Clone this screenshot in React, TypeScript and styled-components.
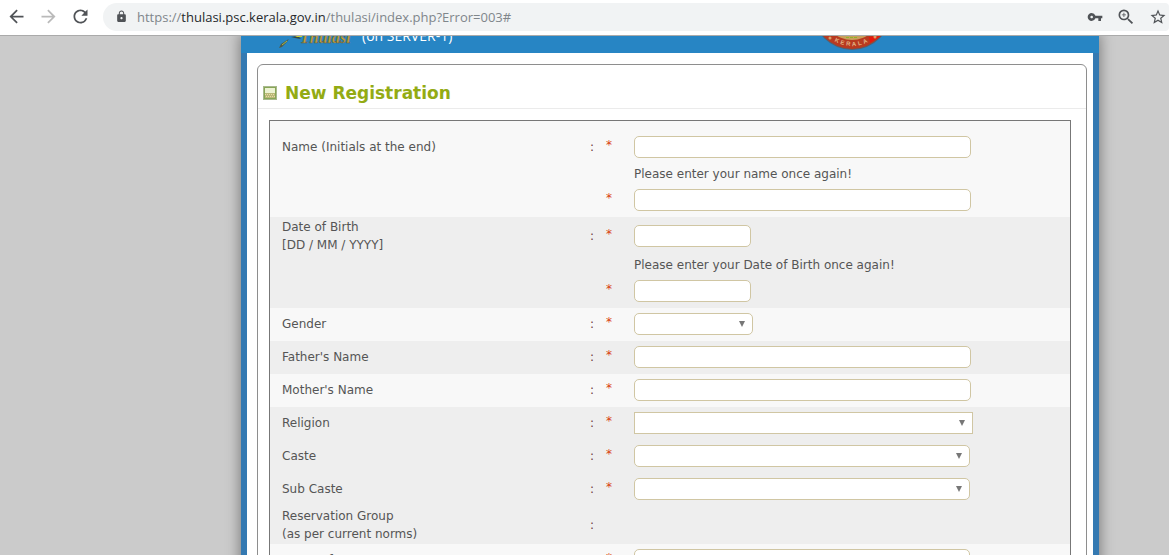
import React from "react";
import styled, { createGlobalStyle } from "styled-components";
import {
  MdArrowBack,
  MdArrowForward,
  MdRefresh,
  MdLock,
  MdVpnKey,
  MdZoomIn,
  MdStarBorder,
} from "react-icons/md";

const GlobalStyle = createGlobalStyle`
  * { box-sizing: border-box; }
  body { margin: 0; background: #cbcbcb; }
`;

const Browser = styled.div`
  display: flex;
  flex-direction: column;
  height: 100vh;
  overflow: hidden;
`;

const Toolbar = styled.header`
  flex: none;
  display: flex;
  align-items: center;
  height: 36px;
  padding: 0 0 2px;
  background: #fff;
  border-bottom: 1px solid #aaa;
`;

const NavButton = styled.button`
  display: flex;
  align-items: center;
  justify-content: center;
  width: 32px;
  height: 32px;
  padding: 0;
  border: 0;
  background: none;
  color: ${(p) => (p.disabled ? "#bababa" : "#505357")};
`;

const AddressBar = styled.div`
  flex: 1;
  display: flex;
  align-items: center;
  height: 28px;
  margin-left: 7px;
  padding: 0 2px 0 12px;
  border-radius: 14px 4px 4px 14px;
  background: #f1f3f4;
  color: #505357;
`;

const Url = styled.div`
  flex: 1;
  margin-left: 9px;
  font: 13px/20px "Open Sans", sans-serif;
  color: #80868b;
  white-space: nowrap;
`;

const Host = styled.span`
  color: #26292c;
`;

const BarActions = styled.div`
  display: flex;
  align-items: center;
  gap: 13px;
`;

const BarButton = styled.button`
  display: flex;
  padding: 0;
  border: 0;
  background: none;
  color: #505357;
`;

const Viewport = styled.main`
  flex: 1;
  min-height: 0;
  overflow: hidden;
  padding: 0 70px 0 241px;
  background: #cbcbcb;
`;

const Site = styled.div`
  background: #fff;
  box-shadow: 0 0 12px 2px rgba(0, 0, 0, 0.35);
`;

const Banner = styled.div`
  display: flex;
  align-items: flex-end;
  height: 17px;
  padding: 0 207px 0 37px;
  overflow: hidden;
  background: #2785c4;
`;

const Logo = styled.div`
  display: flex;
  align-items: flex-end;
  width: 84px;
  height: 17px;
`;

const ServerName = styled.div`
  flex: 1;
  font: 14px/34px "Open Sans", sans-serif;
  color: #fff;
`;

const Body = styled.div`
  padding: 11px 6px 0 10px;
  border: solid #357ab2;
  border-width: 0 6px;
`;

const Panel = styled.section`
  border: 1px solid #8e8e8e;
  border-radius: 6px 6px 0 0;
`;

const PanelHead = styled.div`
  display: flex;
  align-items: center;
  gap: 8px;
  height: 44px;
  padding: 12px 5px 0;
  border-bottom: 1px solid #ebebeb;
`;

const Title = styled.h1`
  margin: 0;
  font: bold 17px/20px "DejaVu Sans", sans-serif;
  color: #93ab14;
`;

const Form = styled.form`
  margin: 11px 15px 0 11px;
  border: 1px solid #777;
  font: 12px/18px "DejaVu Sans", sans-serif;
  color: #555;
`;

const Group = styled.div<{ $shade?: boolean; $first?: boolean }>`
  padding-top: ${(p) => (p.$first ? 10 : 0)}px;
  background: ${(p) => (p.$shade ? "#eee" : "#f8f8f8")};
`;

const Line = styled.div<{ $tall?: boolean }>`
  display: grid;
  grid-template-columns: 308px 16px 28px 1fr;
  align-items: center;
  min-height: 33px;
  padding: 1px 0 ${(p) => (p.$tall ? 1 : 2)}px 12px;
`;

const Hint = styled.p`
  margin: 0 0 0 364px;
  line-height: 20px;
`;

const Label = styled.label`
  white-space: pre-line;
`;

const Colon = styled.span`
  color: #703c3c;
`;

const Star = styled.span`
  padding-bottom: 4px;
  color: #d8400c;
`;

const TextBox = styled.input<{ $width: number }>`
  display: block;
  width: ${(p) => p.$width}px;
  height: 22px;
  padding: 0 5px;
  border: 1px solid #d0c6a3;
  border-radius: 5px;
  background: #fff;
  font: inherit;
  color: inherit;
`;

const SelectWrap = styled.div<{ $width: number }>`
  position: relative;
  width: ${(p) => p.$width}px;

  &::after {
    content: "";
    position: absolute;
    top: 8px;
    right: 8px;
    border: solid transparent;
    border-width: 6px 3px 0;
    border-top-color: #777;
    pointer-events: none;
  }
`;

const SelectBox = styled.select<{ $square?: boolean }>`
  display: block;
  appearance: none;
  width: 100%;
  height: 22px;
  padding: 0 20px 0 5px;
  border: 1px solid #d0c6a3;
  border-radius: ${(p) => (p.$square ? 0 : 5)}px;
  background: #fff;
  font: inherit;
  color: inherit;
`;

type RowProps = {
  id: string;
  label?: string;
  required?: boolean;
  children?: React.ReactNode;
};

const Row = ({ id, label, required = true, children }: RowProps) => (
  <Line $tall={label?.includes("\n")}>
    {label ? <Label htmlFor={id}>{label}</Label> : <span />}
    <Colon>{label ? ":" : ""}</Colon>
    <Star>{required ? "*" : ""}</Star>
    {children}
  </Line>
);

const Select = ({ id, width, square }: { id: string; width: number; square?: boolean }) => (
  <SelectWrap $width={width}>
    <SelectBox id={id} $square={square}>
      <option value="" aria-label="None" />
    </SelectBox>
  </SelectWrap>
);

const LogoMark = () => (
  <svg width="76" height="17" viewBox="0 0 76 17" aria-hidden="true">
    <path d="M1 12 3 8 9 4 11 3 8 7 4 11Z" fill="#4d5a48" />
    <path d="M4 9 9 5" stroke="#a9b94a" strokeWidth="1" />
    <path d="M13 1 20 0 23 3 17 2Z" fill="#38463c" />
    <path d="M17 0h7v1h-5Z" fill="#c9cf35" />
    <path d="M24 6 72 6" stroke="#526d7b" strokeWidth="1" opacity=".5" />
    <text x="22" y="7" fontFamily="Liberation Serif, serif" fontSize="16" fontStyle="italic" fontWeight="bold" fill="#c4a53e" stroke="#5c5a44" strokeWidth=".5">
      Thulasi
    </text>
  </svg>
);

const Emblem = () => (
  <svg width="80" height="17" viewBox="0 64 80 17" role="img" aria-label="Kerala emblem">
    <circle cx="40" cy="39" r="39" fill="#56606e" />
    <circle cx="40" cy="39" r="38" fill="#b83a20" />
    <path d="M57 65 69 64 58 71Z" fill="#e5180c" />
    <circle cx="40" cy="39" r="29" fill="#c9a05c" />
    <path d="M34 65.500h12" stroke="#8fb52b" strokeWidth="1" strokeDasharray="3 1" />
    <circle cx="18" cy="66" r="1.5" fill="#d9a066" />
    <circle cx="63" cy="65" r="1.5" fill="#d9a066" />
    <path id="ring" d="M5 39a35 35 0 0 0 70 0" fill="none" />
    <text fontFamily="Liberation Sans, sans-serif" fontSize="6" fontWeight="bold" letterSpacing="2" fill="#e0b184">
      <textPath href="#ring" startOffset="50%" textAnchor="middle">
        KERALA
      </textPath>
    </text>
  </svg>
);

const PictureIcon = () => (
  <svg width="14" height="14" viewBox="0 0 14 14" aria-hidden="true">
    <rect x=".5" y=".5" width="13" height="13" fill="#87a657" stroke="#a9b98e" />
    <rect x="2" y="2" width="10" height="5" fill="#edf3d3" />
    <rect x="2" y="7" width="10" height="5" fill="#b9b978" />
    <path d="M2 8.500h10M3 10.500h9" stroke="#ecd9a6" strokeDasharray="1 1" />
  </svg>
);

export default function App() {
  return (
    <Browser>
      <GlobalStyle />
      <Toolbar>
        <NavButton aria-label="Back"><MdArrowBack size={21} /></NavButton>
        <NavButton aria-label="Forward" disabled><MdArrowForward size={21} /></NavButton>
        <NavButton aria-label="Reload"><MdRefresh size={21} /></NavButton>
        <AddressBar>
          <MdLock size={13} />
          <Url>
            https://<Host>thulasi.psc.kerala.gov.in</Host>/thulasi/index.php?Error=003#
          </Url>
          <BarActions>
            <BarButton aria-label="Passwords"><MdVpnKey size={16} /></BarButton>
            <BarButton aria-label="Zoom"><MdZoomIn size={20} /></BarButton>
            <BarButton aria-label="Bookmark"><MdStarBorder size={18} /></BarButton>
          </BarActions>
        </AddressBar>
      </Toolbar>
      <Viewport>
        <Site>
          <Banner>
            <Logo><LogoMark /></Logo>
            <ServerName>(on SERVER-1)</ServerName>
            <Emblem />
          </Banner>
          <Body>
            <Panel>
              <PanelHead>
                <PictureIcon />
                <Title>New Registration</Title>
              </PanelHead>
              <Form>
                <Group $first>
                  <Row id="name" label="Name (Initials at the end)">
                    <TextBox id="name" $width={337} />
                  </Row>
                  <Hint id="name-hint">Please enter your name once again!</Hint>
                  <Row id="name2">
                    <TextBox id="name2" aria-labelledby="name-hint" $width={337} />
                  </Row>
                </Group>
                <Group $shade>
                  <Row id="dob" label={"Date of Birth\n[DD / MM / YYYY]"}>
                    <TextBox id="dob" $width={117} />
                  </Row>
                  <Hint id="dob-hint">Please enter your Date of Birth once again!</Hint>
                  <Row id="dob2">
                    <TextBox id="dob2" aria-labelledby="dob-hint" $width={117} />
                  </Row>
                </Group>
                <Group>
                  <Row id="gender" label="Gender"><Select id="gender" width={119} /></Row>
                </Group>
                <Group $shade>
                  <Row id="father" label="Father's Name"><TextBox id="father" $width={337} /></Row>
                </Group>
                <Group>
                  <Row id="mother" label="Mother's Name"><TextBox id="mother" $width={337} /></Row>
                </Group>
                <Group $shade>
                  <Row id="religion" label="Religion"><Select id="religion" width={339} square /></Row>
                  <Row id="caste" label="Caste"><Select id="caste" width={336} /></Row>
                  <Row id="subcaste" label="Sub Caste"><Select id="subcaste" width={336} /></Row>
                  <Row id="group" label={"Reservation Group\n(as per current norms)"} required={false}>
                    <output id="group" />
                  </Row>
                </Group>
                <Group>
                  <Row id="other" label="Name of"><Select id="other" width={336} /></Row>
                </Group>
              </Form>
            </Panel>
          </Body>
        </Site>
      </Viewport>
    </Browser>
  );
}
